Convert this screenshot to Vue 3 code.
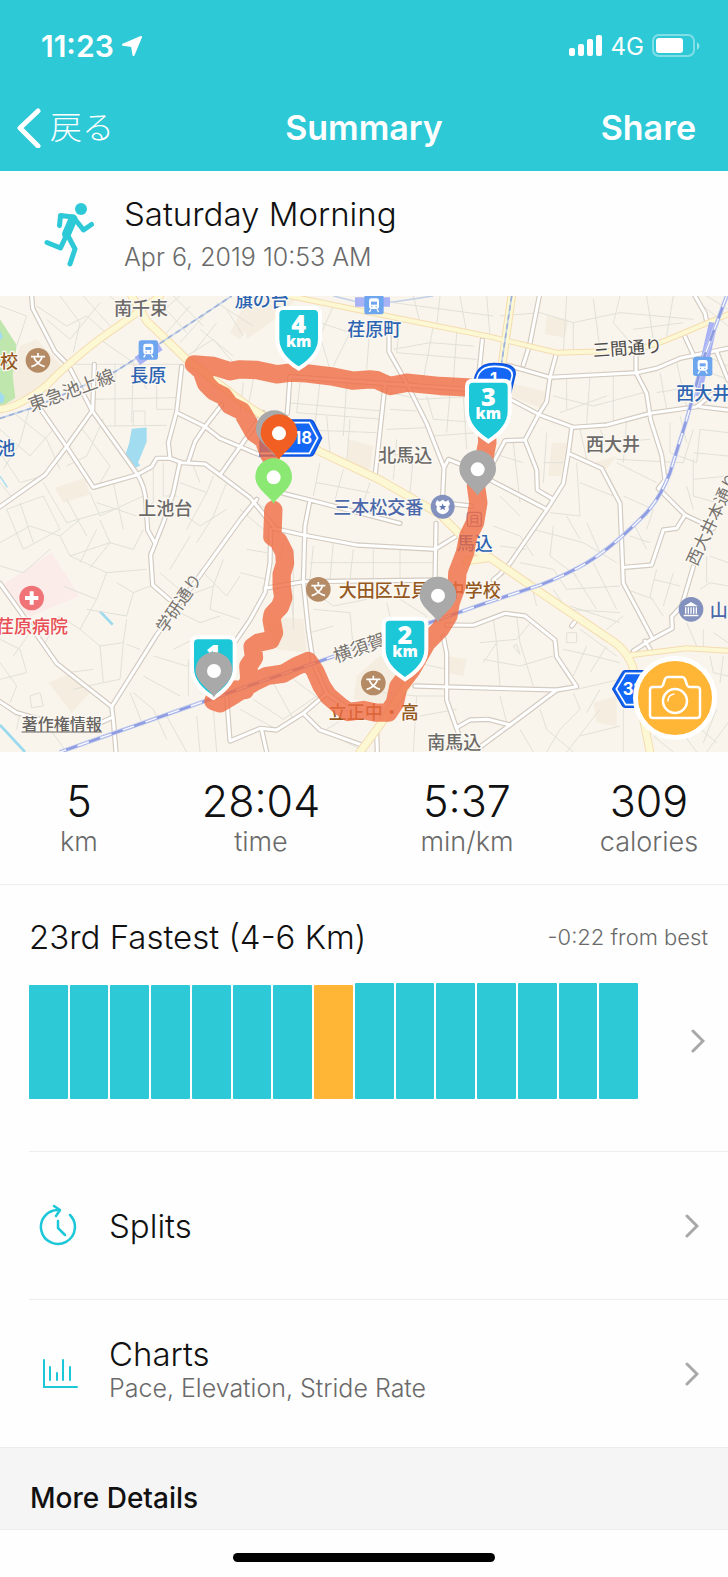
<template>
  <div class="screen">
    <header class="top">
      <!-- Phone status line -->
      <div class="status">
        <div class="clock">
          <span>11:23</span>
          <svg class="icon-location" viewBox="0 0 20 20" fill="currentColor">
            <path d="M19 1 11.500 19 10 10 1 8.700Z" stroke="currentColor" stroke-width="2" stroke-linejoin="round"></path>
          </svg>
        </div>
        <div class="signal">
          <svg class="icon-bars" viewBox="0 0 34 22" fill="currentColor">
            <rect x="0" y="13" width="6" height="8" rx="2"></rect>
            <rect x="9" y="9" width="6" height="12" rx="2"></rect>
            <rect x="18" y="4" width="6" height="17" rx="2"></rect>
            <rect x="27" y="0" width="6" height="21" rx="2"></rect>
          </svg>
          <span>4G</span>
          <svg class="icon-battery" viewBox="0 0 48 24">
            <rect x="1" y="1" width="41" height="21" rx="6" fill="none" stroke="#fff" stroke-width="2" opacity=".4"></rect>
            <rect x="4" y="4" width="27" height="15" rx="3" fill="#fff"></rect>
            <path d="M45 8v8q5-4 0-8z" fill="#fff" opacity=".5"></path>
          </svg>
        </div>
      </div>

      <nav class="nav">
        <button class="back" type="button">
          <svg class="icon-back" viewBox="0 0 24 40" fill="none" stroke="currentColor" stroke-width="5" stroke-linecap="round" stroke-linejoin="round">
            <path d="M21 3 3 20 21 38"></path>
          </svg>
          <span>戻る</span>
        </button>
        <h1>Summary</h1>
        <button class="share" type="button">Share</button>
      </nav>
    </header>

    <section class="activity">
      <svg class="icon-run" viewBox="0 0 50 64" fill="none" stroke="currentColor" stroke-width="5" stroke-linecap="round" stroke-linejoin="round">
        <circle cx="37" cy="6" r="6" fill="currentColor" stroke="none"></circle>
        <path d="M15.500 22.500 16.500 12.500 29 14 34 20 39.500 27 47.500 21.500"></path>
        <path d="M29 16 22.500 31" stroke-width="9"></path>
        <path d="M23 31 16.500 45 3 39.500"></path>
        <path d="M23 31 31 46 26 61"></path>
      </svg>
      <div class="activity-text">
        <h2>Saturday Morning</h2>
        <p>Apr 6, 2019 10:53 AM</p>
      </div>
    </section>

    <section class="map">
      <svg class="map-canvas" viewBox="0 0 2184 1368">
        <rect width="2184" height="1368" fill="#f9f5ed"></rect>

        <!-- Parks, water, blocks -->
        <path class="block" d="M0 330 60 150 110 130 190 215 100 290ZM690 110 730 30 760 60 720 130ZM720 0H900L840 60 740 130ZM165 575 255 545 270 595 190 620ZM145 1160 215 1130 270 1190 215 1250ZM1045 430 1120 450 1110 520 1040 510ZM1640 60 1705 70 1695 125 1635 115ZM1530 260 1650 290 1630 340 1530 300ZM1655 440 1700 440 1685 540 1645 540ZM1780 500 1850 480 1810 530ZM790 960 910 970 920 1070 830 1060ZM1070 1140 1140 1080 1240 1130 1200 1230 1060 1210ZM1780 1220 1850 1200 1850 1290 1790 1280ZM1340 1080 1400 1090 1390 1140 1340 1130Z"></path>
        <path d="M0 70 50 147 38 240 46 305 0 335Z" fill="#bfe6ad"></path>
        <path d="M0 108 6 122 0 130ZM0 290 12 302 8 318 0 320ZM397 400 438 397 438 437 412 500 418 508 405 514 378 477 390 440ZM0 540 22 574" fill="#a2dcf0" stroke="#a2dcf0" stroke-width="4"></path>
        <path d="M300 946 338 986M0 1287 75 1368" fill="none" stroke="#9bd9ee" stroke-width="8"></path>
        <path d="M155 769 238 900 90 962 0 872Z" fill="#fbecea"></path>

        <!-- Streets -->
        <path class="lane" v-for="d in lanes" :key="d" :d="d"></path>
        <path class="street-edge" v-for="d in streets" :key="d" :d="d"></path>
        <path class="street" v-for="d in streets" :key="d" :d="d"></path>
        <path class="avenue-edge" v-for="r in avenues" :key="r.d" :d="r.d" :stroke-width="r.width + 6"></path>
        <path class="avenue" v-for="r in avenues" :key="r.d" :d="r.d" :stroke-width="r.width"></path>

        <!-- Railways -->
        <g fill="none">
          <path d="M0 367 100 335 345 227 480 142 695 0M1000 0 1060 15 1180 18 1300 0M1535 0 1505 200" stroke="#c3d1e6" stroke-width="5"></path>
          <path d="M0 367 100 335 345 227 480 142 695 0M1535 0 1505 200" stroke="#9fb3da" stroke-width="5" stroke-dasharray="16 12"></path>
          <path d="M2140 80 2090 300" stroke="#a9b2f5" stroke-width="26"></path>
          <path d="M412 195 480 150M1065 18H1170" stroke="#a9b2f5" stroke-width="28"></path>
          <path :d="railway" stroke="#c9d3ee" stroke-width="13"></path>
          <path :d="railway" stroke="#8f9ce2" stroke-width="8"></path>
          <path :d="railway" stroke="#f4f5ff" stroke-width="5" stroke-dasharray="36 36"></path>
        </g>

        <!-- Points of interest -->
        <g v-for="s in stations" :key="s.x" :transform="`translate(${s.x} ${s.y})`">
          <rect x="-29" y="-29" width="58" height="58" rx="8" fill="#6ea5ef"></rect>
          <rect x="-15" y="-19" width="30" height="32" rx="7" fill="#fff"></rect>
          <path d="M-9-9H9V0H-9Z" fill="#6ea5ef"></path>
          <path d="M-9 14-14 22M9 14 14 22" stroke="#fff" stroke-width="4"></path>
          <path d="M-8 6H-5M5 6H8" stroke="#6ea5ef" stroke-width="4"></path>
        </g>
        <g v-for="s in schools" :key="s.x" :transform="`translate(${s.x} ${s.y})`">
          <circle r="37" fill="#b58b66"></circle>
          <path d="M0-22V-12M-21-11H21M-12-8Q-3 12 20 19M12-8Q3 12-20 19" fill="none" stroke="#fff" stroke-width="5"></path>
        </g>
        <g transform="translate(95 906)">
          <circle r="37" fill="#ef7377"></circle>
          <path d="M0-20V20M-20 0H20" stroke="#fff" stroke-width="12"></path>
        </g>
        <g transform="translate(1328 632)">
          <circle r="36" fill="#8291bd"></circle>
          <path d="M-17-20-9-15 0-21 9-15 17-20 22-8 17 0Q24 16 0 23-24 16-17 0L-22-8Z" fill="#fff"></path>
          <path d="M0-10 3-2 11-2 5 3 7 11 0 6-7 11-5 3-11-2-3-2Z" fill="#6177ad"></path>
        </g>
        <g transform="translate(2073 940)">
          <circle r="37" fill="#8291bd"></circle>
          <path d="M-21-9 0-22 21-9ZM-22 16H22V21H-22Z" fill="#fff"></path>
          <path d="M-16-6V13M-8-6V13M0-6V13M8-6V13M16-6V13" stroke="#fff" stroke-width="4"></path>
        </g>
        <g transform="translate(1423 670)" fill="none" stroke="#6f7fc0" stroke-width="4">
          <rect x="-21" y="-21" width="42" height="42" rx="8"></rect>
          <rect x="-10" y="-12" width="20" height="20" rx="4"></rect>
          <path d="M-8-2H8M-8 9-12 15M8 9 12 15"></path>
        </g>

        <!-- Place names -->
        <text
          v-for="l in labels"
          :key="l.text + l.x"
          :class="['label', l.kind]"
          :font-size="l.size || 54"
          :transform="`translate(${l.x} ${l.y}) rotate(${l.turn || 0})`"
        >{{ l.text }}</text>
        <a href="#copyright">
          <text class="label copyright" x="65" y="1302" font-size="48">著作権情報</text>
          <path d="M65 1308H306" stroke="#66625e" stroke-width="3"></path>
        </a>

        <!-- Road shields -->
        <g class="shield">
          <path d="M780 372H930Q938 372 942 380L965 426 942 472Q938 480 930 480H780Z"></path>
          <path d="M1422 300Q1412 202 1482 202 1556 202 1544 242L1530 300Z"></path>
          <path d="M1960 1124H1876Q1870 1124 1867 1130L1838 1179 1867 1228Q1870 1234 1876 1234H1960Z"></path>
        </g>
        <g class="shield-line">
          <path d="M780 380H928L953 426 928 472H780"></path>
          <path d="M1430 290Q1420 211 1482 211 1546 211 1535 246L1524 290"></path>
          <path d="M1960 1132H1877L1849 1179 1877 1226H1960"></path>
        </g>
        <g class="shield-text">
          <text x="850" y="444">318</text>
          <text x="1470" y="268">1</text>
          <text x="1868" y="1196">318</text>
        </g>

        <!-- Recorded run -->
        <path class="route" :d="route"></path>

        <!-- Pins and kilometre flags -->
        <g v-for="m in markers" :key="m.x + '-' + m.y" :transform="`translate(${m.x} ${m.y})`">
          <template v-if="m.km">
            <path class="flag" d="M-46-182H46Q64-182 64-164V-90Q64-40 0 0-64-40-64-90V-164Q-64-182-46-182Z"></path>
            <text class="flag-km" y="-106">{{ m.km }}</text>
            <text v-if="m.unit" class="flag-unit" y="-66">{{ m.unit }}</text>
          </template>
          <template v-else>
            <path d="M0 0C-10-24-55-45-55-82A55 55 0 0 1 55-82C55-45 10-24 0 0Z" :fill="m.color"></path>
            <circle cy="-80" r="21" fill="#fff"></circle>
          </template>
        </g>
      </svg>

      <button class="camera" type="button" aria-label="Add photo">
        <svg viewBox="0 0 54 46" fill="none" stroke="currentColor" stroke-width="2.500" stroke-linejoin="round">
          <path d="M5 12H12Q14 12 15 10L17 4Q18 2 20 2H34Q36 2 37 4L39 10Q40 12 42 12H49Q52 12 52 15V40Q52 43 49 43H5Q2 43 2 40V15Q2 12 5 12Z"></path>
          <circle cx="27" cy="26" r="12"></circle>
          <path d="M20 26Q20 20 26 19" stroke-width="1.500" stroke-linecap="round"></path>
        </svg>
      </button>
    </section>

    <dl class="stats">
      <div v-for="s in stats" :key="s.label">
        <dd>{{ s.value }}</dd>
        <dt>{{ s.label }}</dt>
      </div>
    </dl>

    <section class="fastest">
      <div class="fastest-head">
        <h2>23rd Fastest (4-6 Km)</h2>
        <span>-0:22 from best</span>
      </div>
      <button class="fastest-body" type="button" aria-label="Compare runs">
        <span class="bars">
          <span
            v-for="(h, i) in bars"
            :key="i"
            :class="['bar', { current: i === 7 }]"
            :style="{ height: h + '%' }"
          ></span>
        </span>
        <svg class="icon-next" viewBox="0 0 14 24"><path d="M2 2 12 12 2 22"></path></svg>
      </button>
    </section>

    <button class="row" type="button">
      <svg class="icon-row" viewBox="0 0 40 44" fill="none" stroke="currentColor" stroke-width="2" stroke-linecap="round" stroke-linejoin="round">
        <path d="M31 11A17 17 0 1 1 20 6" stroke-width="2.500"></path>
        <path d="M15 2 21 6 17 12M19 17V24L26 31" stroke-width="2.500"></path>
      </svg>
      <span class="row-text">
        <span class="row-title">Splits</span>
      </span>
      <svg class="icon-next" viewBox="0 0 14 24"><path d="M2 2 12 12 2 22"></path></svg>
    </button>

    <button class="row" type="button">
      <svg class="icon-row" viewBox="0 0 40 44" fill="none" stroke="currentColor" stroke-width="2" stroke-linecap="round">
        <path d="M5 8V35H38M11 15V28M18 21V28M24 8V28M31 15V28"></path>
      </svg>
      <span class="row-text">
        <span class="row-title">Charts</span>
        <span class="row-note">Pace, Elevation, Stride Rate</span>
      </span>
      <svg class="icon-next" viewBox="0 0 14 24"><path d="M2 2 12 12 2 22"></path></svg>
    </button>

    <h3 class="more">More Details</h3>
    <footer class="home"><span></span></footer>
  </div>
</template>

<script setup>
const stats = [
  { value: '5', label: 'km' },
  { value: '28:04', label: 'time' },
  { value: '5:37', label: 'min/km' },
  { value: '309', label: 'calories' },
];

// Bar heights in percent of the chart box
const bars = [98, 98, 98, 98, 98, 98, 98, 98, 100, 100, 100, 100, 100, 100, 100];

const avenues = [
  { width: 18, d: 'M0 340Q60 332 140 268 200 205 300 128L400 58 480 0' },
  { width: 20, d: 'M395 0 440 75 560 190 750 335 960 467 1140 552 1320 655 1430 765 1470 785 1640 902 1830 1030Q1895 1070 1905 1142L1950 1368' },
  { width: 12, d: 'M870 0 1220 72 1470 122 1670 170 1840 165Q1930 162 2000 132L2184 55' },
  { width: 20, d: 'M1535 0 1505 215' },
  { width: 12, d: 'M1895 1077 2060 1057 2184 1064' },
  { width: 20, d: 'M1400 795 1470 785M1230 1150 1160 1260 1080 1368' },
];

const streets = [
  'M95 0 98 37 165 167 205 207 275 342 410 532Q435 570 438 620L443 702 465 742',
  'M283 205 278 342 200 452 135 537 0 632',
  'M120 337 200 452 280 574 410 537 455 512 470 487 510 487 545 500 615 504 660 537 750 605 820 690',
  'M545 212 530 347 505 440 510 487',
  'M530 350 615 392 660 427 720 452 800 485',
  'M665 327 615 392 585 437 565 497',
  'M540 497 520 590 490 680 452 777 458 867 510 912',
  'M790 350 750 410 660 537',
  'M770 610 720 672 590 852 470 1017 335 1232 340 1272 348 1368',
  'M0 862 100 1002 170 1102 335 1232',
  'M0 1217 50 1250 120 1270M290 1286 335 1265',
  'M690 1060 750 972 795 890 810 800 812 700M795 877 910 857 1320 852',
  'M680 1202 690 1335 780 1297 830 1302 910 1252 980 1192M785 1302 800 1368M910 1252 960 1302 1080 1345',
  'M850 592 930 612 1200 682M930 612 915 690 910 857 925 1002 940 1102 980 1192 1060 1250',
  'M820 697 910 717 1070 747 1305 760 1370 720M1308 682 1305 862',
  'M1167 82V167L1220 262 1280 382 1332 515 1328 600M1332 515 1345 490 1420 520M1340 622 1415 630',
  'M870 242 862 352M1155 267 1125 542M870 242 1400 280M1447 132 1435 250',
  'M1618 0 1590 142 1570 207',
  'M1520 207 1650 244 1910 230 1970 217 2040 187 2184 157',
  'M1668 177 1650 244 1640 317 1615 357 1575 432 1610 522 1612 582 1660 610',
  'M1535 312 1620 357 1720 394 1820 387 1950 352 2090 332 2140 292M2100 332 2184 342',
  'M1715 397 1705 472 1690 562 1640 642 1530 802 1500 835 1480 852',
  'M1705 472 1805 517 1860 622 1870 862 1955 1022',
  'M1908 182V230L1940 292 1952 372 1985 477 1995 552 1975 577 2055 657 2140 697',
  'M2055 657 2030 697 1990 702 1955 807 1875 814',
  'M1575 432 1515 434 1480 500M1470 552 1640 640',
  'M2085 0 2115 52 2120 77M2055 122 2085 187M2150 167 2184 252',
  'M2080 812 2045 930 2015 962 2017 997 1955 1030 1900 1065M1935 1035 1950 1060',
  'M1340 987 1420 988 1515 952 1575 960 1665 1032 1670 1082 1730 1172 1670 1182 1245 1170',
  'M1670 1182 1530 1287 1420 1368M1370 1295 1410 1272 1465 1270 1530 1287',
  'M1330 1022 1340 1072V1212L1375 1312M1130 1312 1132 1368M1715 990 1730 970',
];

const lanes = [
  'M0 30 80 60 50 150M110 30 200 90 260 60 330 120M140 70 210 130 300 20M180 0 240 80 220 170M250 0 330 90M330 0 390 60M300 130 400 200 440 280M210 205H545M345 200V390M400 205 395 380M280 310 530 305M320 390 500 388M470 210V340H520M400 390V345H435V390',
  'M480 20 560 110M520 0 610 90M570 30 500 110M620 50 540 140M650 80 580 170M680 40 730 120M600 100 700 180M650 20 760 90M470 60 540 0M560 180 640 130 700 200',
  'M0 400 90 480 160 400M40 350 140 430 180 520M0 470 60 560 110 545M90 330 60 440 10 520M240 390 330 510M310 370 260 480 200 510M0 560 40 610M330 510 300 560',
  'M20 640 130 600 180 700 70 760 20 640M60 620 100 740M130 560 200 680 340 640M200 610 260 720M270 590 300 660 430 600M340 560 370 700M290 620 410 660M460 520 460 620 430 640M490 500V600H530M580 510 600 560M540 560 620 590 640 540M620 590 560 700M680 560 640 660 590 740M530 640 600 690 680 640',
  'M0 740 90 690 180 720 240 670M0 810 70 830 150 760M180 720 210 780 330 740 300 672M210 780 320 830 440 820M240 800 290 700M270 815 330 740 400 760 430 700M320 830 290 910 190 870M350 860 400 890 380 960 260 940M400 890 450 870M290 910 240 1000 180 960 130 1050M180 960 90 1010 40 1080M240 1000 300 1050 370 1040 380 970',
  'M300 1050 310 1160 220 1180M370 1040 360 1150 310 1160M380 1045 420 1060M0 1030 60 1060 80 1130 0 1150M90 1200 120 1190 130 1230 95 1235ZM200 1130 280 1120M0 1100 50 1170 30 1220M150 1300 200 1368M60 1250 50 1300M400 1190 460 1240 500 1330M430 1140 540 1200M390 1190 430 1290M460 1080 560 1110 600 1080M520 940 600 980 660 960M560 900 640 870 670 790M600 820 680 900 720 840M510 820 570 720M480 830 560 900M640 870 630 940 720 970M565 1090V1200M520 1060 600 1020M590 1260 600 1368M640 1240 650 1368M500 1260 560 1368',
  'M730 260 720 350M760 250 745 330 800 360M900 260 890 350 1150 370M960 255 940 430M1040 260 1030 420M860 320 1145 345M870 400 1130 410M1000 30 960 120 990 220M900 60 1050 110 1160 100M1050 110 1000 210M1110 90 1100 220M1200 80 1190 170 1430 190M1300 90 1270 250M1370 110 1360 260M1180 160 1290 140 1420 150M1240 0 1260 80M1320 0 1310 90M1380 0 1400 110M1180 20 1480 60M940 20 1000 30',
  'M1170 290 1260 310 1440 300M1170 340 1250 345M1280 300 1300 370 1440 380M1160 400 1280 395M1300 420 1430 410M1350 290 1340 410M1390 300 1400 460M1130 470 1240 480M1190 430 1180 550M1240 480 1230 590M980 360 990 470M1050 370 1040 500M960 500 940 600M1030 520 1000 630M1110 560 1080 650M950 560 1110 590',
  'M740 600 800 640M720 640 790 700M740 760 800 770M720 830 800 850M880 760V1000M850 740 840 790M940 750 930 850M1000 740 990 850M1060 760 1050 850M1120 760V850M1200 760V850M930 800 1300 800M930 880 1000 930 1100 910M1160 920 1180 1000 1110 1030M940 940 1050 950 1060 1060M1200 910 1280 960 1230 1010M930 1010 1000 990M870 860 880 970M720 1240 830 1300M820 1160 880 1270M760 1210 850 1270 950 1200M880 1150 960 1210M980 1300 1060 1250M1000 1320 1100 1368M1150 1190 1250 1200 1240 1368M1250 1200 1340 1200M1250 1100 1340 1120M1260 1260 1370 1240',
  'M1460 0 1470 120M1500 60 1620 50 1720 80 1860 50M1700 0 1690 170M1780 10 1800 160M1860 0 1840 80 1900 150M1720 80V170M1940 0 1960 130M2020 0 2000 120M1860 50 2080 70M1900 100 2050 80M2120 0 2184 40M2110 30 2184 90M1700 250 1700 340M1770 240 1760 380M1840 240V380M1660 300 1780 330 1930 290M1680 350 1820 300M1980 230 2000 340M2030 200 2060 330M1970 290 2090 270M2120 180 2184 210M2100 220 2184 250',
  'M1740 400 1760 490M1800 400 1820 440 1950 430M1880 370 1870 500M1470 470 1570 500M1500 600 1560 660M1540 440 1560 620M1640 410 1630 560M1690 500 1630 500M1730 500 1740 660 1650 650M1740 560 1840 600M1850 500 1970 560M1850 490 2050 500 2080 400M2010 380 2010 470 2090 500 2100 400 2184 410M2080 470 2184 480M2080 550 2184 540M2080 490V600L2150 620M2060 570 2080 640M2040 360 2060 440M1870 600 1960 640 1940 700',
  'M1480 690 1560 720 1600 780M1500 750 1580 760M1600 700 1750 740 1850 800M1660 690 1650 780 1730 840M1700 660 1740 730M1760 680 1800 770M1560 800 1660 820 1700 880 1860 870M1590 850 1610 930M1660 880 1700 940 1860 950M1720 830 1790 940M1780 800 1850 940M1710 930 1860 980M1820 1000 1870 960M1890 720 1950 740M1900 680 1940 760M1960 850 2040 870M1970 820 1950 900 1990 960M1880 880 1960 910M2020 830 1990 930M2060 980 2090 1050M2110 1000V1060M2140 1010 2184 1040M2100 880 2130 860 2184 870M2130 780 2184 800M2120 860V780',
  'M1440 1040 1550 1030 1600 970M1480 970 1490 1040 1450 1100M1550 960 1560 1040 1600 1170M1450 1090 1560 1110 1660 1080M1490 1040 1500 1170M1550 1045 1560 1075 1540 1050ZM1700 1010V1040H1730V1010ZM1740 1000 1850 1080M1690 1060 1780 1080 1860 1100M1760 1050 1720 1140M1820 1050 1770 1130M1730 1180 1860 1150M1720 1190 1740 1240 1680 1300 1640 1368M1620 1240 1640 1300 1720 1368M1800 1180 1760 1250M1560 1300 1600 1368M1500 1200 1520 1280M1740 1320 1860 1290M1700 1368 1800 1240M1870 1240V1368M1960 1320 2020 1368M2040 1300 2090 1368M2080 1280 2150 1340M2150 1240 2110 1340M2184 1280 2120 1368M2130 1080 2140 1130 2184 1140M2170 1080 2160 1160',
];

const railway = 'M2180 0 2110 190 2060 370 2010 530Q1975 620 1920 670 1820 770 1740 812 1650 860 1590 877L1440 927 970 1092 610 1217 180 1368';

const route = 'M820 642 817 722 835 735 853 770 855 802 845 835 845 872 850 905 840 932 818 955 815 972 822 1010 812 1032 775 1040 758 1052 762 1085 745 1110 748 1150 735 1182 690 1180 640 1215 660 1222 705 1195 760 1160 800 1140 850 1133 890 1110 925 1095 945 1125 965 1170 985 1200 1020 1230 1045 1248 1090 1242 1130 1250 1165 1250 1185 1220 1195 1172 1235 1120 1280 1040 1320 1000 1345 960 1352 920 1370 870 1372 830 1395 770 1405 720 1425 680 1435 620 1428 570 1450 500 1462 440 1455 280 1400 274 1320 270 1220 260 1170 270 1130 252 1110 250 1060 254 1000 242 920 232 870 230 830 235 770 222 720 220 690 226 640 210 582 205 605 225 618 262 640 285 670 300 690 328 725 345 745 380 762 410 790 430 810 480';

const stations = [
  { x: 445, y: 162 },
  { x: 1122, y: 26 },
  { x: 2108, y: 211 },
];

const schools = [
  { x: 114, y: 193 },
  { x: 955, y: 880 },
  { x: 1120, y: 1161 },
];

const labels = [
  { text: '南千束', x: 342, y: 57, kind: 'area' },
  { text: '旗の台', x: 704, y: 34, kind: 'station' },
  { text: '荏原町', x: 1042, y: 120, kind: 'station' },
  { text: '長原', x: 391, y: 259, kind: 'station' },
  { text: '校', x: 0, y: 216, kind: 'school' },
  { text: '東急池上線', x: 94, y: 347, turn: -20, kind: 'line' },
  { text: '池', x: -8, y: 476, kind: 'station' },
  { text: '上池台', x: 415, y: 657, kind: 'area' },
  { text: '北馬込', x: 1135, y: 498, kind: 'area' },
  { text: '三本松交番', x: 1000, y: 655, kind: 'civic' },
  { text: '三間通り', x: 1780, y: 182, size: 52, turn: -4, kind: 'line dark' },
  { text: '西大井', x: 2029, y: 312, kind: 'station' },
  { text: '西大井', x: 1758, y: 465, kind: 'area' },
  { text: '西大井本通り', x: 2090, y: 812, size: 50, turn: -65, kind: 'line' },
  { text: '荏原病院', x: -12, y: 1011, kind: 'hospital' },
  { text: '学研通り', x: 496, y: 1014, size: 50, turn: -56, kind: 'line' },
  { text: '横須賀線', x: 1008, y: 1100, turn: -19, kind: 'line' },
  { text: '馬込', x: 1370, y: 762, kind: 'station' },
  { text: '大田区立貝塚中学校', x: 1016, y: 904, kind: 'school' },
  { text: '立正中・高', x: 986, y: 1268, kind: 'school' },
  { text: '南馬込', x: 1282, y: 1359, kind: 'area' },
  { text: '山', x: 2129, y: 963, kind: 'civic' },
];

const markers = [
  { x: 896, y: 218, km: 4, unit: 'km' },
  { x: 1465, y: 436, km: 3, unit: 'km' },
  { x: 1215, y: 1150, km: 2, unit: 'km' },
  { x: 640, y: 1206, km: 1 },
  { x: 642, y: 1205, color: '#a9a9a9' },
  { x: 1314, y: 979, color: '#a9a9a9' },
  { x: 1433, y: 600, color: '#a9a9a9' },
  { x: 823, y: 480, color: '#a9a9a9' },
  { x: 837, y: 492, color: '#f25f22' },
  { x: 821, y: 624, color: '#8ae873' },
];
</script>

<style>
body {
  margin: 0;
  background: #fefefe;
}
</style>

<style scoped>
.screen {
  font-family: Inter, "Noto Sans CJK JP", sans-serif;
  font-weight: 300;
  color: #111;
}
h1,
h2,
h3,
p,
dl,
dd {
  margin: 0;
}
button {
  background: none;
  border: 0;
  padding: 0;
  font: inherit;
  color: inherit;
  text-align: left;
}
svg {
  display: block;
  flex-shrink: 0;
}
.top {
  background: #2ec9d7;
  color: #fff;
}
.status {
  display: flex;
  justify-content: space-between;
  align-items: center;
  height: 92px;
  padding: 0 28px 0 41px;
  box-sizing: border-box;
}
.clock,
.signal {
  display: flex;
  align-items: center;
  gap: 8px;
}
.clock {
  font-size: 30px;
  font-weight: 600;
}
.signal {
  font-size: 24px;
  font-weight: 400;
}
.icon-location {
  width: 20px;
}
.icon-bars {
  width: 34px;
}
.icon-battery {
  width: 48px;
}
.nav {
  display: grid;
  grid-template-columns: 1fr auto 1fr;
  align-items: center;
  height: 79px;
  padding: 0 17px 8px;
  box-sizing: border-box;
}
.nav h1,
.share {
  font-size: 34px;
  font-weight: 600;
}
.share {
  justify-self: end;
  margin-right: 15px;
}
.back {
  display: flex;
  align-items: center;
  gap: 9px;
  font-size: 32px;
  line-height: 40px;
}
.icon-back {
  width: 24px;
}
.activity {
  display: flex;
  align-items: center;
  gap: 30px;
  height: 125px;
  padding: 2px 44px 0;
  box-sizing: border-box;
}
.icon-run {
  width: 50px;
  color: #2ec9d7;
}
.activity h2,
.fastest h2,
.row-title {
  font-size: 33px;
  font-weight: 300;
  line-height: 44px;
}
.activity p,
.row-note {
  font-size: 25px;
  line-height: 42px;
  color: #6a6a6a;
}
.map {
  position: relative;
}
.map-canvas {
  width: 100%;
}
.block {
  fill: #f5ede0;
}
.lane {
  fill: none;
  stroke: #e1e1d8;
  stroke-width: 3;
}
.street-edge,
.street,
.avenue-edge,
.avenue,
.route {
  fill: none;
  stroke-linecap: round;
  stroke-linejoin: round;
}
.street-edge {
  stroke: #d3cac0;
  stroke-width: 16;
}
.street {
  stroke: #fff;
  stroke-width: 9;
}
.avenue-edge {
  stroke: #f5dcb0;
}
.avenue {
  stroke: #fcf8d4;
}
.label {
  font-family: "Noto Sans CJK JP", sans-serif;
  font-weight: 500;
  paint-order: stroke;
  stroke: #fbf8f2;
  stroke-width: 8;
  stroke-linejoin: round;
}
.area {
  fill: #6c6a68;
}
.line {
  fill: #77736f;
  font-weight: 400;
}
.dark {
  fill: #4c4a48;
}
.station {
  fill: #2c64b2;
}
.school {
  fill: #95581f;
}
.civic {
  fill: #4c68aa;
}
.hospital {
  fill: #e84e55;
}
.copyright {
  fill: #66625e;
}
.shield {
  fill: #1467f5;
  stroke: #0d4fd8;
  stroke-width: 4;
}
.shield-line {
  fill: none;
  stroke: #fff;
  stroke-width: 5;
}
.shield-text {
  fill: #fff;
  font-size: 50px;
  font-weight: 700;
}
.route {
  stroke: #ef6c42;
  stroke-width: 55;
  opacity: 0.8;
}
.flag {
  fill: #1cc7d8;
  stroke: #fff;
  stroke-width: 12;
}
.flag-km,
.flag-unit {
  font-family: "Open Sans", sans-serif;
  font-weight: 800;
  fill: #fff;
  text-anchor: middle;
}
.flag-km {
  font-size: 76px;
}
.flag-unit {
  font-size: 46px;
}
.camera {
  position: absolute;
  right: 11px;
  bottom: 12px;
  display: grid;
  place-items: center;
  width: 84px;
  height: 84px;
  box-sizing: border-box;
  border: 5px solid #fff;
  border-radius: 50%;
  background: #ffb535;
  color: #fff;
}
.camera svg {
  width: 54px;
}
.stats {
  display: grid;
  grid-template-columns: 158fr 206fr 206fr 158fr;
  padding: 24px 0 26px;
  border-bottom: 1px solid #eee;
  text-align: center;
}
.stats div {
  display: flex;
  flex-direction: column;
}
.stats dd {
  font-size: 43px;
  line-height: 50px;
}
.stats dt {
  font-size: 27px;
  line-height: 32px;
  color: #6a6a6a;
}
.fastest {
  padding: 30px 20px 52px 29px;
}
.fastest-head {
  display: flex;
  justify-content: space-between;
  align-items: center;
  font-size: 22px;
  color: #6a6a6a;
}
.fastest-head h2 {
  color: #111;
}
.fastest-body {
  display: flex;
  justify-content: space-between;
  align-items: center;
  gap: 53px;
  width: 100%;
  margin-top: 24px;
  padding-right: 3px;
}
.bars {
  flex: 1;
  display: flex;
  align-items: flex-end;
  gap: 2px;
  height: 116px;
}
.bar {
  flex: 1;
  border-radius: 1px;
  background: #2ec9d7;
}
.current {
  background: #ffb535;
}
.icon-next {
  width: 14px;
  fill: none;
  stroke: #a8a8a8;
  stroke-width: 3;
  stroke-linecap: round;
}
.row {
  display: flex;
  align-items: center;
  gap: 30px;
  width: calc(100% - 29px);
  height: 148px;
  margin-left: 29px;
  padding: 0 29px 0 10px;
  box-sizing: border-box;
  border-top: 1px solid #eee;
}
.icon-row {
  width: 40px;
  color: #1cc7d8;
}
.row-text {
  flex: 1;
  display: flex;
  flex-direction: column;
}
.row-title {
  line-height: 32px;
}
.row-note {
  margin-bottom: 4px;
  line-height: 36px;
}
.more {
  padding: 33px 30px 14px;
  border: solid #ececec;
  border-width: 1px 0;
  background: #f5f5f5;
  font-size: 28px;
  font-weight: 500;
  line-height: 34px;
}
.home {
  display: flex;
  justify-content: center;
  padding: 23px 0 15px;
}
.home span {
  width: 36%;
  height: 9px;
  border-radius: 5px;
  background: #000;
}
</style>
